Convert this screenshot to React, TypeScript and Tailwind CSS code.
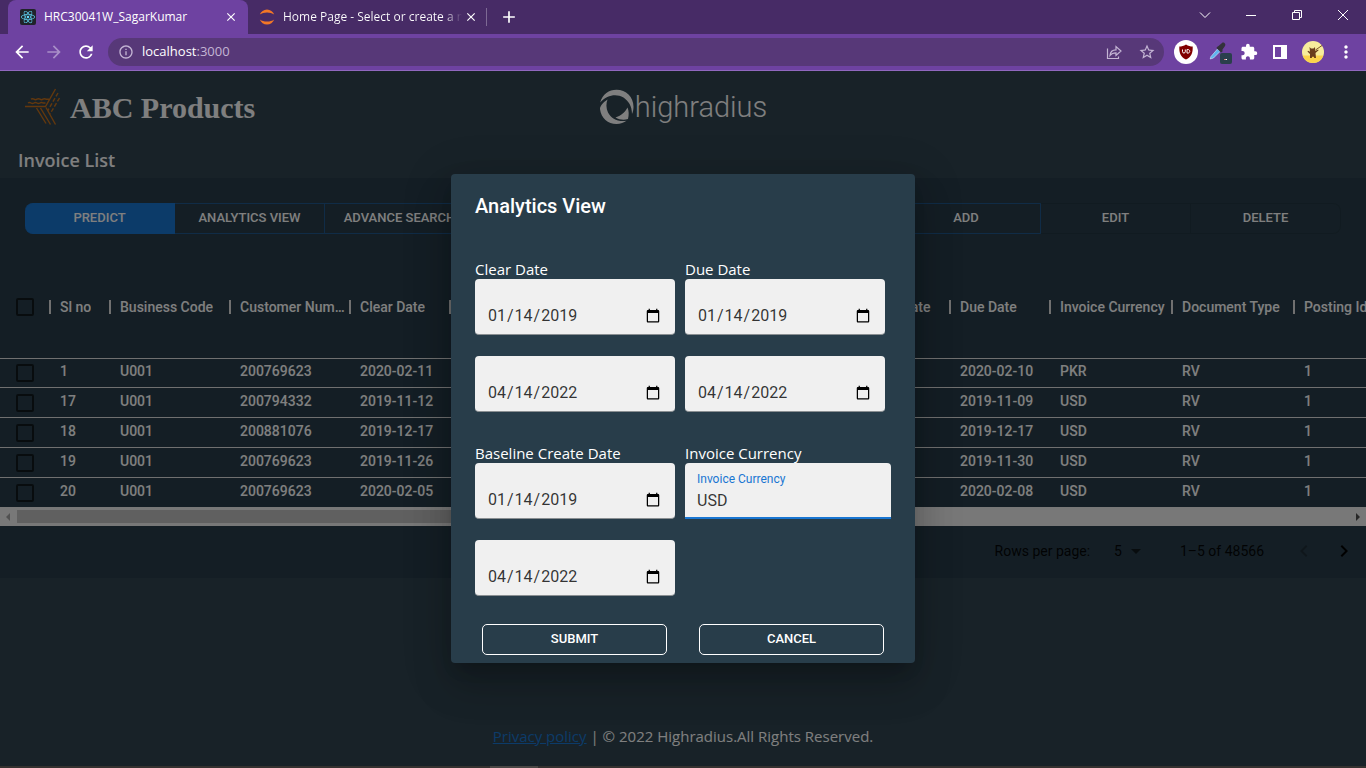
import React, { useState } from "react";
import { FaReact } from "react-icons/fa";
import {
  MdArrowBack,
  MdArrowForward,
  MdRefresh,
  MdInfoOutline,
  MdStarBorder,
  MdMoreVert,
  MdChevronLeft,
  MdChevronRight,
  MdArrowDropDown,
  MdClose,
  MdAdd,
  MdExtension,
} from "react-icons/md";

const ui = "font-['Open_Sans','Noto_Sans',sans-serif]";

function TabStrip() {
  return (
    <div className="flex h-[34px] bg-[#472b66] pl-2 text-xs text-white">
      <div className="flex w-60 items-center gap-2 rounded-t-lg bg-[#6e42a1] px-3">
        <span className="flex size-4 shrink-0 items-center justify-center rounded-xs bg-[#20232a]">
          <FaReact className="size-3.5 text-[#61dafb]" />
        </span>
        <span className="flex-1 truncate">HRC30041W_SagarKumar</span>
        <button aria-label="Close tab" className="-mr-0.5">
          <MdClose className="size-3.5" />
        </button>
      </div>
      <div className="flex w-[238px] items-center gap-2 pl-[11px] pr-2">
        <svg viewBox="0 0 16 16" className="size-4 shrink-0" fill="#f37726">
          <path d="M.8 5.6C2 2.5 4.7.4 8 .4s6 2.100 7.200 5.200C13.300 4.200 10.800 3.400 8 3.400S2.700 4.200.8 5.600Z" />
          <path d="M.8 10.400C2 13.500 4.700 15.600 8 15.600s6-2.100 7.200-5.200C13.300 11.800 10.800 12.600 8 12.600s-5.300-.8-7.200-2.200Z" />
        </svg>
        <span className="flex-1 overflow-hidden whitespace-nowrap bg-linear-to-r from-white from-90% to-transparent bg-clip-text text-transparent">
          Home Page - Select or create a n
        </span>
        <button aria-label="Close tab" className="-ml-1.5">
          <MdClose className="size-3.5" />
        </button>
      </div>
      <div className="my-2 w-px bg-[#7d6994]" />
      <button aria-label="New tab" className="ml-3">
        <MdAdd className="size-5" />
      </button>
      <div className="ml-auto flex items-center pb-1">
        <button aria-label="Search tabs" className="flex w-[46px] justify-center">
          <svg width="12" height="12" viewBox="0 0 12 12" fill="none" stroke="currentColor">
            <path d="M1 3.500 6 8.500 11 3.500" />
          </svg>
        </button>
        <button aria-label="Minimize" className="flex w-[46px] justify-center">
          <svg width="12" height="12" viewBox="0 0 12 12" stroke="currentColor">
            <path d="M1 6.500H11" />
          </svg>
        </button>
        <button aria-label="Restore" className="flex w-[46px] justify-center">
          <svg width="12" height="12" viewBox="0 0 12 12" fill="none" stroke="currentColor">
            <path d="M1.500 3.500h7v7h-7zM3.500 3.500v-2h7v7h-2" />
          </svg>
        </button>
        <button aria-label="Close window" className="flex w-[46px] justify-center">
          <svg width="12" height="12" viewBox="0 0 12 12" stroke="currentColor">
            <path d="M1 1 11 11M11 1 1 11" />
          </svg>
        </button>
      </div>
    </div>
  );
}

function AddressBar() {
  return (
    <div className="flex h-[37px] items-center border-b border-[#9068bf] bg-[#6e42a1] px-3 text-white">
      <div className="flex w-24 gap-3">
        <button aria-label="Back"><MdArrowBack className="size-5" /></button>
        <button aria-label="Forward" className="text-[#a98fc8]"><MdArrowForward className="size-5" /></button>
        <button aria-label="Reload"><MdRefresh className="size-5" /></button>
      </div>
      <div className="flex h-7 flex-1 items-center gap-2 rounded-full bg-[#573878] pl-2.5 pr-2 text-[#c4b5d4]">
        <MdInfoOutline className="size-4" />
        <span className="flex-1 text-[13px]">
          <span className="text-white">localhost</span>:3000
        </span>
        <button aria-label="Share" className="mr-2">
          <svg width="16" height="16" viewBox="0 0 16 16" fill="none" stroke="currentColor" strokeWidth="1.2">
            <path d="M1.500 4.500v10h11v-2M4 11.500c.3-4 2.500-5.700 6-5.700V2.500l5 4.500-5 4.500V8.800C7.500 8.800 5.500 9.500 4 11.500Z" />
          </svg>
        </button>
        <button aria-label="Bookmark"><MdStarBorder className="size-[18px]" /></button>
      </div>
      <div className="-mr-0.5 flex items-center pl-2.5">
        <button aria-label="uBlock Origin" className="flex size-6 items-center justify-center rounded-full bg-white">
          <svg width="16" height="16" viewBox="0 0 16 16">
            <path d="M8 .5C5.800 2 3.500 2.500 1.300 2.500c-.2 6 1 10.300 6.700 13 5.700-2.700 6.900-7 6.700-13C12.500 2.500 10.200 2 8 .5Z" fill="#800000" />
            <path d="M4.500 5.500v2.200c0 1.800 2.800 1.800 2.800 0V5.500M9 5.500v3.600h.8c2.600 0 2.600-3.600 0-3.600Z" fill="none" stroke="#fff" />
          </svg>
        </button>
        <button aria-label="Color picker" className="ml-2.5">
          <svg width="24" height="24" viewBox="0 0 24 24">
            <path d="M3 16.500 9.500 9l2.500 2.500L5.500 18l-3.300 1Z" fill="#5fb4f0" stroke="#d9ecfa" strokeWidth=".6" />
            <path d="m9 7 1.500-1L14 3c1.500-1.500 4.500 1 3 3L14.500 9.500v2L13 12.500 8.500 8Z" fill="#33323a" />
            <rect x="12" y="13" width="12" height="11" rx="2" fill="#2a3f4c" />
            <path d="M16 19.500h1.500" stroke="#e66" />
            <path d="M17.500 19.500h1.500" stroke="#fff" />
          </svg>
        </button>
        <button aria-label="Extensions" className="ml-2"><MdExtension className="size-[18px]" /></button>
        <button aria-label="Side panel" className="ml-3.5">
          <svg width="16" height="16" viewBox="0 0 16 16" fill="currentColor">
            <path d="M1 1h14v14H1zM3 3v10h6V3z" fillRule="evenodd" />
          </svg>
        </button>
        <button aria-label="Profile" className="ml-3.5">
          <svg width="22" height="22" viewBox="0 0 22 22">
            <circle cx="11" cy="11" r="11" fill="#f7ec9c" />
            <path d="M.6 14.500h20.800A11 11 0 0 1 .6 14.500Z" fill="#fbd34c" />
            <path d="M8 17v-4L5.500 10.500l.5-.7L8 10.800 7.500 6l1.500 1.500h2.500L13 6l.2 4 3-1.500.4.8L13.500 12 14 17h-1.700l-.5-1.200h-1.600L9.700 17Z" fill="#6a3e1c" />
            <path d="M13.500 9 20 4.500" stroke="#7b5426" />
          </svg>
        </button>
        <button aria-label="Menu" className="ml-3"><MdMoreVert className="size-5" /></button>
      </div>
    </div>
  );
}

function AbcLogo() {
  return (
    <svg width="36" height="38" viewBox="0 0 36 38" fill="none" stroke="#c8701a" strokeWidth="1.400">
      <path d="M1 18.500H21.500L31.500 1" />
      <path d="M4 15q1.500-1 3 0t3 0 3 0 3 0 3 0h2.500M7 11.200q1.500-1 3 0t3 0 3 0 3 0 3 0h3" />
      <path d="M34 5 23.500 23M35.500 10 26 26" strokeDasharray="4 2" />
      <path d="M12.500 20 22 35.500M16.500 20 26.500 36.500M22 19.500 31.500 36.500" />
    </svg>
  );
}

function HighRadiusLogo() {
  return (
    <div className="flex items-center">
      <svg width="36" height="36" viewBox="0 0 36 36" fill="#fff">
        <path d="M1.200 13.500C3.500 5 10 .8 17.500.8 27 .8 34.500 8 34.500 17.800c0 3-.6 5.200-1.500 7.200 0-8-3.500-13-8.500-16.500C17 4.500 8 6 1.200 13.500Z" />
        <path d="M8.500 10.500C4 13.500 1 17 1 20c1 9 8 15 16.500 15 4 0 7.500-1.200 10-3.200C18.500 33 12 29.500 9 23.500 7 19 7 14.500 8.500 10.500Z" />
        <path d="M16.500 28.500C21.500 27 26 23.500 28.500 18.500c1.500 3.500 1.500 7.500.5 11.500-4 1.200-8.500.8-12.500-1.500Z" />
      </svg>
      <span className="font-[Roboto,sans-serif] text-[29px] font-light leading-9 text-white">highradius</span>
    </div>
  );
}

const groupButton = "h-[31px] w-[150px] border-y border-r pb-0.5 text-[13px] font-medium text-white";

function Toolbar() {
  return (
    <div className="flex items-center justify-between px-[25px] pt-[25px]">
      <div className="flex">
        <button className={`${groupButton} rounded-l-lg border-[#1976d2] bg-[#1976d2]`}>PREDICT</button>
        <button className={`${groupButton} border-[#1976d2]/50`}>ANALYTICS VIEW</button>
        <button className={`${groupButton} rounded-r-lg border-[#1976d2]/50`}>ADVANCE SEARCH</button>
      </div>
      <div className="flex">
        <button className={`${groupButton} rounded-l-lg border-l border-[#1976d2]/50`}>ADD</button>
        <button className={`${groupButton} border-black/10`}>EDIT</button>
        <button className={`${groupButton} rounded-r-lg border-black/10`}>DELETE</button>
      </div>
    </div>
  );
}

const columns = [
  "Sl no",
  "Business Code",
  "Customer Number",
  "Clear Date",
  "Business Year",
  "Document Id",
  "Posting Date",
  "Baseline Create Date",
  "Due Date",
  "Invoice Currency",
  "Document Type",
  "Posting Id",
];

const rows = [
  ["1", "U001", "200769623", "2020-02-11", "2020", "1930438491", "2020-01-26", "2020-01-26", "2020-02-10", "PKR", "RV", "1"],
  ["17", "U001", "200794332", "2019-11-12", "2019", "1929994362", "2019-10-25", "2019-10-25", "2019-11-09", "USD", "RV", "1"],
  ["18", "U001", "200881076", "2019-12-17", "2019", "1930153801", "2019-12-02", "2019-12-02", "2019-12-17", "USD", "RV", "1"],
  ["19", "U001", "200769623", "2019-11-26", "2019", "1930082517", "2019-11-15", "2019-11-15", "2019-11-30", "USD", "RV", "1"],
  ["20", "U001", "200769623", "2020-02-05", "2020", "1930417744", "2020-01-24", "2020-01-24", "2020-02-08", "USD", "RV", "1"],
];

function Check({ label }: { label: string }) {
  return (
    <input
      type="checkbox"
      aria-label={label}
      className="ml-4 block size-[18px] appearance-none rounded-xs border-2 border-black/60"
    />
  );
}

function InvoiceTable() {
  return (
    <div className="overflow-hidden pt-[22px]">
      <table className="w-[1414px] table-fixed border-separate border-spacing-0 text-left text-sm font-medium text-white">
        <colgroup>
          <col className="w-[50px]" />
          <col className="w-[60px]" />
          <col className="w-[120px]" />
          <col className="w-[120px]" />
          <col className="w-[100px]" />
          <col className="w-[100px]" />
          <col className="w-[120px]" />
          <col className="w-[120px]" />
          <col className="w-[160px]" />
          <col className="w-[100px]" />
          <col className="w-[122px]" />
          <col className="w-[122px]" />
          <col className="w-[120px]" />
        </colgroup>
        <thead>
          <tr className="h-[103px]">
            <th className="border-b border-[#e0e0e0] p-0"><Check label="Select all rows" /></th>
            {columns.map((c) => (
              <th key={c} className="border-b border-[#e0e0e0] p-0 font-medium">
                <div className="-ml-px flex items-center gap-[9px]">
                  <span className="h-3.5 w-0.5 shrink-0 bg-[#e0e0e0]" />
                  <span className="truncate">{c}</span>
                </div>
              </th>
            ))}
          </tr>
        </thead>
        <tbody>
          {rows.map((r) => (
            <tr key={r[0]} className="group h-[30px] first:h-[29px] last:h-[29px]">
              <td className="border-b border-[#e0e0e0] p-0 group-last:border-b-0"><Check label={`Select row ${r[0]}`} /></td>
              {r.map((v, i) => (
                <td key={i} className="border-b border-[#e0e0e0] pb-1 pl-2.5 leading-5 group-last:border-b-0">{v}</td>
              ))}
            </tr>
          ))}
        </tbody>
      </table>
      <div className="flex h-[19px] items-center bg-[#f1f1f1]">
        <svg width="17" height="10" viewBox="0 0 17 10" fill="#a3a3a3"><path d="M10 1v8L6 5z" /></svg>
        <div className="h-[13px] w-1/2 bg-[#c1c1c1]" />
        <svg width="17" height="10" viewBox="0 0 17 10" fill="#505050" className="ml-auto"><path d="M7 1v8l4-4z" /></svg>
      </div>
    </div>
  );
}

function Pagination() {
  return (
    <div className="flex h-[52px] items-center justify-end pb-0.5 pr-2.5 text-sm text-black/90">
      <span>Rows per page:</span>
      <button aria-label="Rows per page" className="ml-6 mr-8 flex items-center gap-0.5">
        5 <MdArrowDropDown className="size-6 text-black/60" />
      </button>
      <span>1–5 of 48566</span>
      <button aria-label="Previous page" className="ml-7 text-black/25"><MdChevronLeft className="size-6" /></button>
      <button aria-label="Next page" className="ml-4 text-black"><MdChevronRight className="size-6" /></button>
    </div>
  );
}

function DateField({ id, label, value }: { id: string; label: string; value: string }) {
  const [date, setDate] = useState(value);
  return (
    <input
      id={id}
      aria-label={label}
      type="date"
      value={date}
      onChange={(e) => setDate(e.target.value)}
      className="block h-14 w-[200px] rounded-sm border-b border-[#8a8f92] bg-[#f0f0f0] px-3 pt-[18px] text-base text-black/80"
    />
  );
}

function DateRange({ id, label, from = "2019-01-14", to = "2022-04-14" }: { id: string; label: string; from?: string; to?: string }) {
  return (
    <div>
      <label htmlFor={id} className={`block pt-0.5 text-[15px] leading-[19px] text-white ${ui}`}>{label}</label>
      <div className="flex flex-col gap-[21px]">
        <DateField id={id} label={`${label} from`} value={from} />
        <DateField id={`${id}-to`} label={`${label} to`} value={to} />
      </div>
    </div>
  );
}

function AnalyticsDialog() {
  const [currency, setCurrency] = useState("USD");
  const action = "h-[31px] w-[185px] rounded-[5px] border border-white pb-0.5 text-[13px] font-medium text-white";
  return (
    <div
      role="dialog"
      aria-labelledby="dialog-title"
      className="w-[464px] rounded-sm bg-[#283d4a] shadow-[0_11px_15px_-7px_rgba(0,0,0,0.2),0_24px_38px_3px_rgba(0,0,0,0.14),0_9px_46px_8px_rgba(0,0,0,0.12)]"
    >
      <h2 id="dialog-title" className="px-6 py-4 text-xl font-medium leading-8 text-white">Analytics View</h2>
      <form onSubmit={(e) => e.preventDefault()} className="pb-2 pt-5">
        <div className="grid grid-cols-[200px_206px] gap-x-2.5 gap-y-[30px] px-6">
          <DateRange id="clear-date" label="Clear Date" />
          <DateRange id="due-date" label="Due Date" />
          <DateRange id="baseline-date" label="Baseline Create Date" />
          <div>
            <span className={`block pt-0.5 text-[15px] leading-[19px] text-white ${ui}`}>Invoice Currency</span>
            <div className="flex h-14 flex-col rounded-t-sm border-b-2 border-[#1976d2] bg-[#f0f0f0] px-3 pt-2">
              <label htmlFor="currency" className="text-xs text-[#1976d2]">Invoice Currency</label>
              <input
                id="currency"
                value={currency}
                onChange={(e) => setCurrency(e.target.value)}
                className="w-full bg-transparent pt-0.5 text-base text-black/80 outline-none"
              />
            </div>
          </div>
        </div>
        <div className="mt-7 flex justify-center gap-8">
          <button type="submit" className={action}>SUBMIT</button>
          <button type="button" className={action}>CANCEL</button>
        </div>
      </form>
    </div>
  );
}

export default function App() {
  return (
    <div className={`flex min-h-screen flex-col ${ui}`}>
      <TabStrip />
      <AddressBar />
      <main className="relative flex flex-1 flex-col bg-[#304551] font-[Roboto,sans-serif]">
        <header className="grid grid-cols-3 items-center px-6 pt-4">
          <div className="flex items-center gap-2.5">
            <AbcLogo />
            <span className="pt-0.5 font-['Liberation_Serif',serif] text-[30px] font-bold leading-[38px] text-white">ABC Products</span>
          </div>
          <div className="flex justify-center">
            <HighRadiusLogo />
          </div>
        </header>
        <h1 className={`px-[18px] pb-1 pt-[19px] text-lg font-semibold leading-7 text-white ${ui}`}>Invoice List</h1>
        <section className="bg-[#283d4a]">
          <Toolbar />
          <InvoiceTable />
          <Pagination />
        </section>
        <footer className={`mt-auto pb-[18px] text-center text-[15px] leading-6 text-white ${ui}`}>
          <a href="#privacy" className="text-[#1976d2] underline">Privacy policy</a> | © 2022 Highradius.All Rights Reserved.
        </footer>
        <div className="absolute inset-0 flex items-center justify-center bg-black/50">
          <AnalyticsDialog />
        </div>
      </main>
      <div className="flex h-0.5 bg-[#353230]">
        <div className="ml-[490px] w-12 bg-[#4a4745]" />
      </div>
    </div>
  );
}
